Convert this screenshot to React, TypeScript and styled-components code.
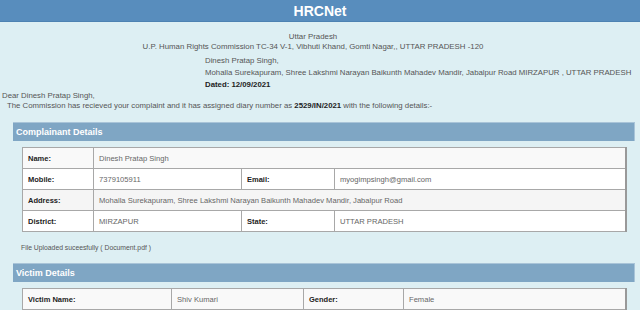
import React from "react";
import styled, { createGlobalStyle } from "styled-components";

const GlobalStyle = createGlobalStyle`
  html, body {
    margin: 0;
    padding: 0;
    background: #ddeff3;
    font-family: "Liberation Sans", Arial, sans-serif;
  }
`;

const Page = styled.div`
  width: 640px;
  height: 310px;
  overflow: hidden;
  background: #ddeff3;
  color: #555;
`;

const Header = styled.div`
  height: 21px;
  background: #588dbd;
  border-bottom: 1px solid #4d82b2;
  color: #fff;
  font-weight: bold;
  font-size: 14px;
  display: flex;
  align-items: center;
  justify-content: center;
`;

const Office = styled.div`
  margin-top: 10px;
  padding-right: 14px;
  text-align: center;
  font-size: 7.85px;
  line-height: 10px;
`;

const Recipient = styled.div`
  margin: 3px 0 0 205px;
  font-size: 7.8px;
  line-height: 12px;
  white-space: nowrap;
`;

const Strong = styled.b`
  color: #222;
`;

const Letter = styled.div`
  font-size: 7.8px;
  line-height: 10px;
  white-space: nowrap;
`;

const Para = styled.div<{ $indent?: number }>`
  padding-left: ${({ $indent }) => $indent ?? 2}px;
`;

const Section = styled.div<{ $top: number }>`
  margin: ${({ $top }) => $top}px 5px 0 13px;
`;

const Bar = styled.div`
  height: 18px;
  background: #7fa6c4;
  border-top: 1px solid #a9c4d8;
  border-right: 1px solid #a9c4d8;
  color: #fff;
  font-weight: bold;
  font-size: 9px;
  display: flex;
  align-items: center;
  padding-left: 3px;
`;

const Table = styled.table`
  margin: 6px 0 0 9px;
  width: 605px;
  border-collapse: collapse;
  table-layout: fixed;
  border-right: 2px solid #999;
  border-bottom: 1px solid #999;
`;

const Row = styled.tr<{ $bg: string }>`
  height: 21px;
  background: ${({ $bg }) => $bg};
`;

const Label = styled.td`
  border: 1px solid #a8a8a8;
  padding: 0 5px;
  font-size: 7.5px;
  font-weight: bold;
  color: #222;
  white-space: nowrap;
`;

const Value = styled.td`
  border: 1px solid #a8a8a8;
  padding: 0 5px;
  font-size: 7.6px;
  color: #666;
  white-space: nowrap;
`;

const Note = styled.div`
  margin: 12px 0 0 21px;
  font-size: 6.8px;
  line-height: 8px;
  color: #555;
`;

export default function App() {
  return (
    <Page>
      <GlobalStyle />
      <Header>HRCNet</Header>
      <Office>
        <div>Uttar Pradesh</div>
        <div>U.P. Human Rights Commission TC-34 V-1, Vibhuti Khand, Gomti Nagar,, UTTAR PRADESH -120</div>
      </Office>
      <Recipient>
        <div>Dinesh Pratap Singh,</div>
        <div>Mohalla Surekapuram, Shree Lakshmi Narayan Baikunth Mahadev Mandir, Jabalpur Road MIRZAPUR , UTTAR PRADESH</div>
        <Strong>Dated: 12/09/2021</Strong>
      </Recipient>
      <Letter>
        <Para>Dear Dinesh Pratap Singh,</Para>
        <Para $indent={7}>
          The Commission has recieved your complaint and it has assigned diary number as <Strong>2529/IN/2021</Strong> with
          the following details:-
        </Para>
      </Letter>

      <Section $top={11}>
        <Bar>Complainant Details</Bar>
        <Table>
          <colgroup>
            <col style={{ width: 71 }} />
            <col style={{ width: 148 }} />
            <col style={{ width: 93 }} />
            <col />
          </colgroup>
          <tbody>
            <Row $bg="#f9f9f9">
              <Label>Name:</Label>
              <Value colSpan={3}>Dinesh Pratap Singh</Value>
            </Row>
            <Row $bg="#ffffff">
              <Label>Mobile:</Label>
              <Value>7379105911</Value>
              <Label>Email:</Label>
              <Value>myogimpsingh@gmail.com</Value>
            </Row>
            <Row $bg="#f5f5f5">
              <Label>Address:</Label>
              <Value colSpan={3}>Mohalla Surekapuram, Shree Lakshmi Narayan Baikunth Mahadev Mandir, Jabalpur Road</Value>
            </Row>
            <Row $bg="#ffffff">
              <Label>District:</Label>
              <Value>MIRZAPUR</Value>
              <Label>State:</Label>
              <Value>UTTAR PRADESH</Value>
            </Row>
          </tbody>
        </Table>
      </Section>
      <Note>File Uploaded suceesfully ( Document.pdf )</Note>

      <Section $top={11}>
        <Bar>Victim Details</Bar>
        <Table>
          <colgroup>
            <col style={{ width: 149 }} />
            <col style={{ width: 132 }} />
            <col style={{ width: 100 }} />
            <col />
          </colgroup>
          <tbody>
            <Row $bg="#f9f9f9">
              <Label>Victim Name:</Label>
              <Value>Shiv Kumari</Value>
              <Label>Gender:</Label>
              <Value>Female</Value>
            </Row>
            <Row $bg="#ffffff">
              <Label />
              <Value />
              <Label />
              <Value />
            </Row>
          </tbody>
        </Table>
      </Section>
    </Page>
  );
}
